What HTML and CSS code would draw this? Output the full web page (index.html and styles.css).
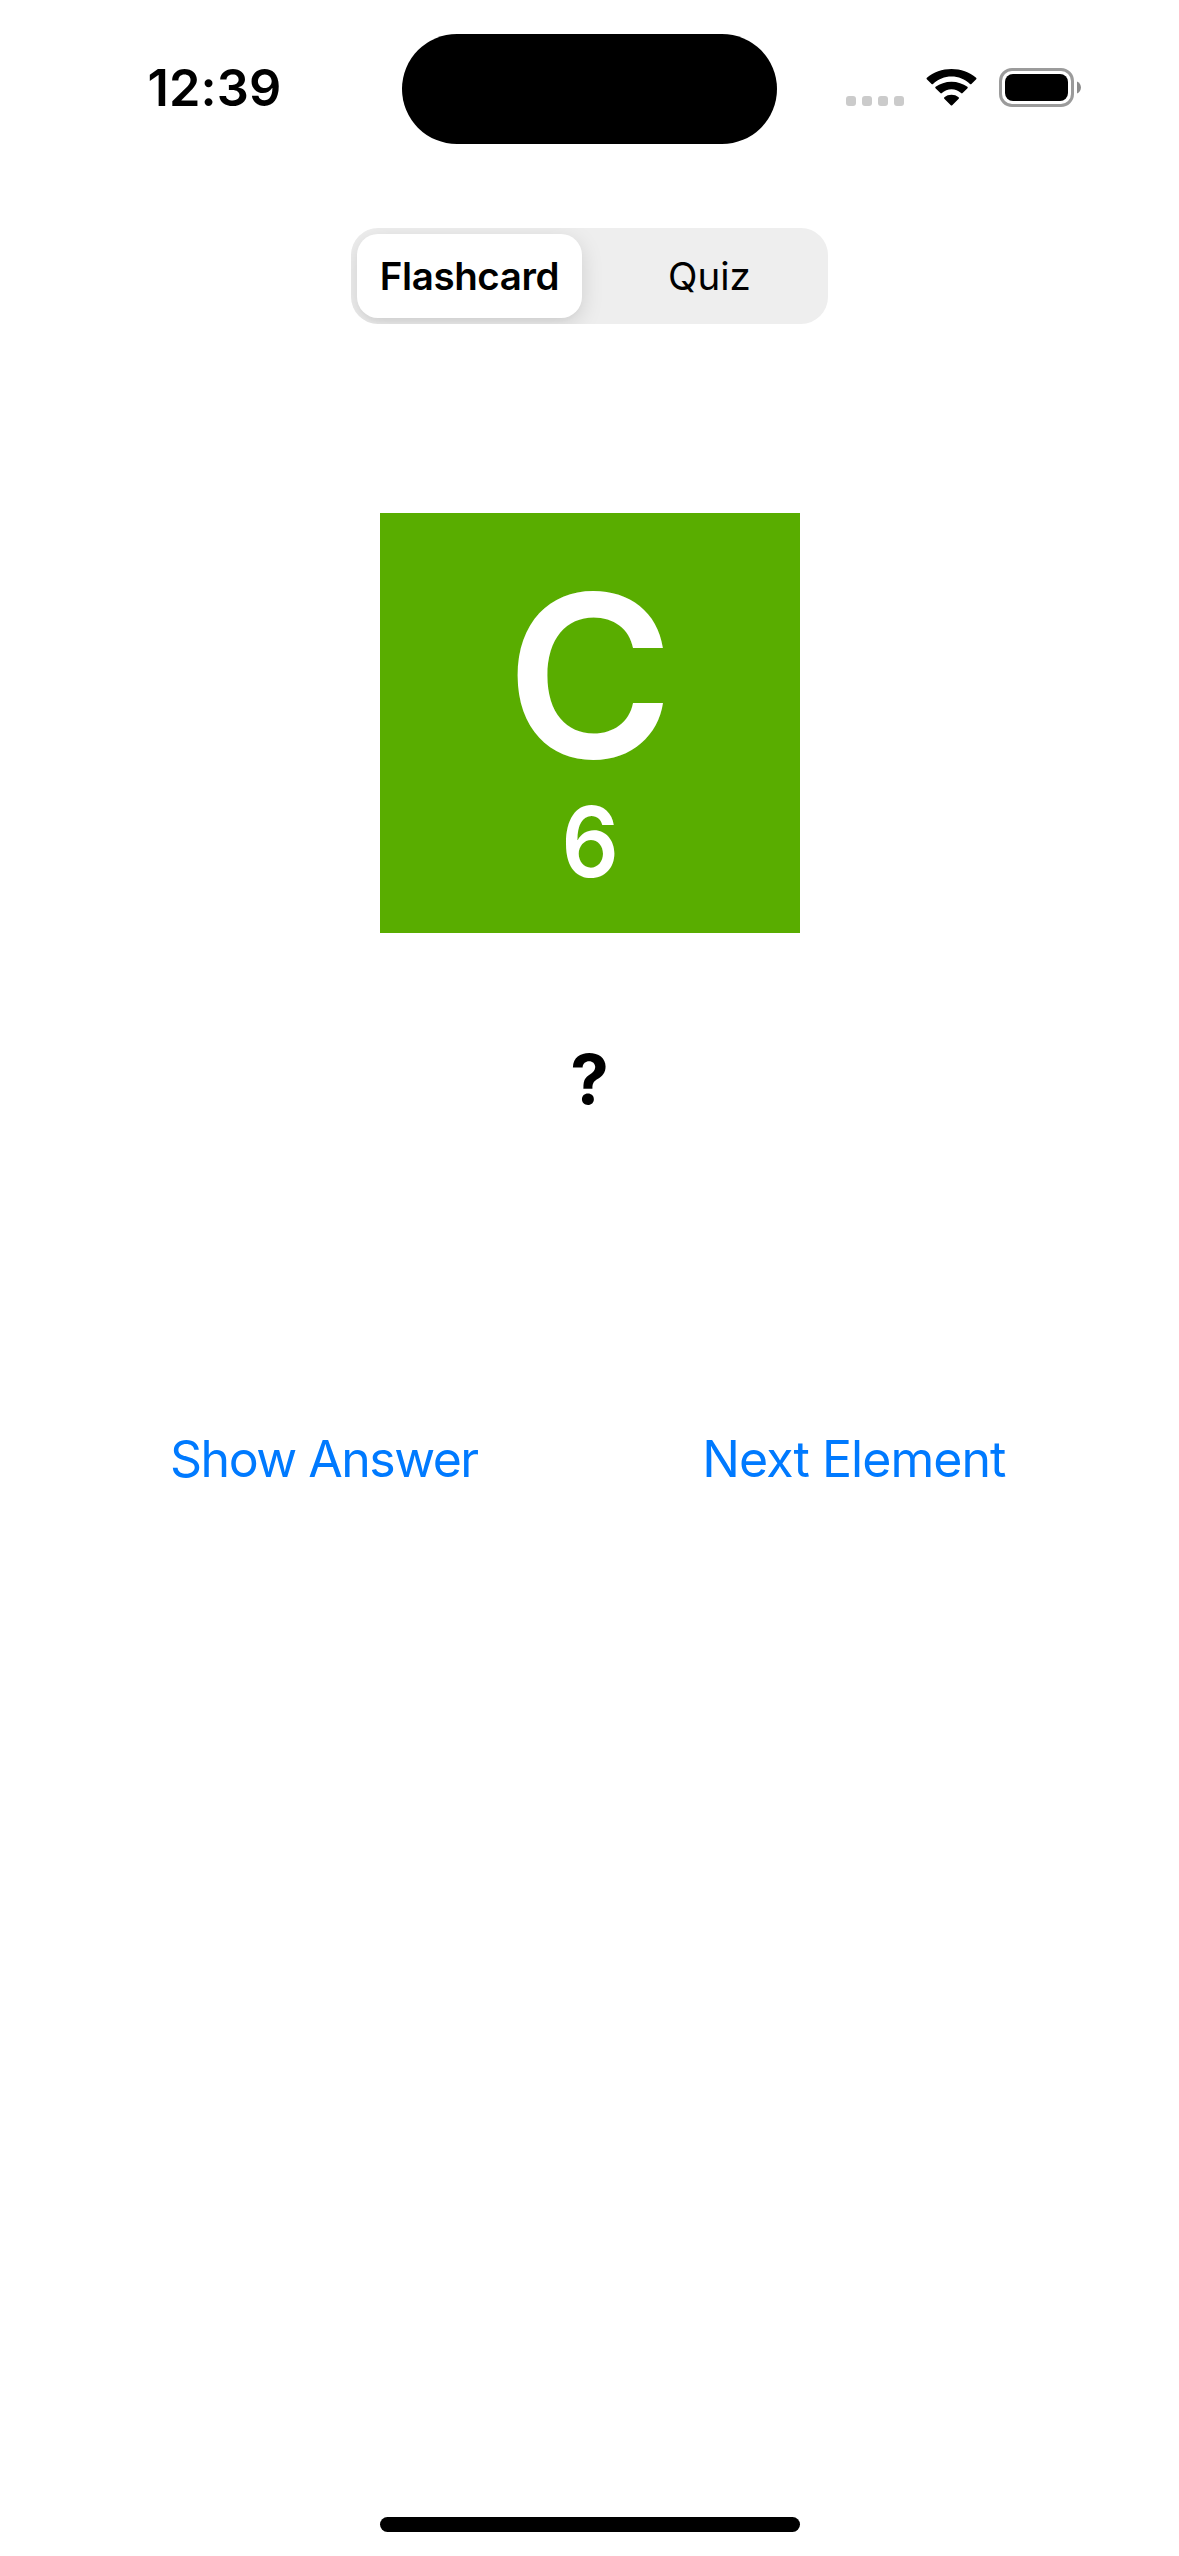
FILE: index.html
```html
<!DOCTYPE html>
<html lang="en">
<head>
<meta charset="utf-8">
<title>Elements</title>
<link rel="stylesheet" href="styles.css">
</head>
<body>
<div class="screen">
  <header class="status-bar">
    <div class="status-left"><span class="clock">12:39</span></div>
    <div class="island"></div>
    <div class="status-icons">
      <svg class="cellular" width="58" height="10" viewBox="0 0 58 10" fill="#cbcbcb">
        <rect x="0" width="10" height="10" rx="3"/>
        <rect x="16" width="10" height="10" rx="3"/>
        <rect x="32" width="10" height="10" rx="3"/>
        <rect x="48" width="10" height="10" rx="3"/>
      </svg>
      <svg class="wifi" width="51" height="37" viewBox="0 0 51 37">
        <path d="M25.500 7.600C32.400 7.600 38.900 10.200 44 15Q44.700 15.700 45.400 15L50.200 10.300Q50.900 9.500 50.100 8.800C43.500 3.200 34.800 0 25.500 0S7.500 3.200.9 8.800Q.1 9.500.8 10.300L5.600 15Q6.300 15.700 7 15C12.100 10.200 18.600 7.600 25.500 7.600Z"/>
        <path d="M25.500 20.300C29.100 20.300 32.500 21.700 35.100 24.100Q35.900 24.800 36.600 24.100L41.500 19.300Q42.200 18.500 41.400 17.800C37.100 14.800 31.500 12.800 25.500 12.800S13.900 14.800 9.600 17.800Q8.800 18.500 9.500 19.300L14.400 24.100Q15.100 24.800 15.900 24.100C18.500 21.700 21.900 20.300 25.500 20.300Z"/>
        <path d="M32.600 28.200Q33.400 28.900 32.700 29.700L26.200 36.200Q25.500 36.900 24.800 36.200L18.300 29.700Q17.600 28.900 18.400 28.200C22.300 24.900 28.700 24.900 32.600 28.200Z"/>
      </svg>
      <svg class="battery" width="82" height="39" viewBox="0 0 82 39">
        <rect x="1.500" y="1.500" width="72" height="36" rx="11.500" fill="none" stroke="#9b9b9b" stroke-width="3"/>
        <rect x="6" y="6" width="63" height="27" rx="8"/>
        <path d="M78 13.500C83.300 15.500 83.300 23.500 78 25.500Z" fill="#8c8c8c"/>
      </svg>
    </div>
  </header>
  <main class="content">
    <nav class="segmented">
      <span class="segment segment-active"><span class="label-flash">Flashcard</span></span>
      <span class="segment segment-quiz"><span class="label-quiz">Quiz</span></span>
    </nav>
    <section class="element-card">
      <div class="symbol">C</div>
      <div class="number">6</div>
    </section>
    <p class="answer">?</p>
    <div class="actions">
      <button class="action action-show" type="button">Show Answer</button>
      <button class="action action-next" type="button">Next Element</button>
    </div>
  </main>
  <footer class="home-indicator"></footer>
</div>
</body>
</html>
```
FILE: styles.css
```css
* { box-sizing: border-box; }
body { margin: 0; background: #fff; font-family: Inter, "Liberation Sans", sans-serif; color: #000; }
.screen { width: 1179px; height: 2556px; display: flex; flex-direction: column; align-items: center; overflow: hidden; background: #fff; }
.status-bar { width: 100%; height: 177px; display: grid; grid-template-columns: 401.500px 375.500px 1fr; align-items: start; flex: none; }
.status-left { padding: 58px 0 0 147.500px; }
.clock { display: block; font-size: 50.500px; font-weight: 600; line-height: 60px; letter-spacing: 0.1px; white-space: nowrap; }
.island { height: 110.500px; margin-top: 33.500px; border-radius: 56px; background: #000; }
.status-icons { display: flex; align-items: flex-start; padding: 68px 0 0 69px; }
.cellular { margin-top: 28px; }
.wifi { margin: 1px 0 0 22px; }
.battery { margin-left: 22px; }
.content { width: 100%; flex: 1; display: flex; flex-direction: column; align-items: center; }
.segmented { width: 477px; height: 96px; margin-top: 51px; padding: 6px; border-radius: 27px; background: #eee; display: grid; grid-template-columns: 225px 1fr; overflow: hidden; font-size: 38.500px; line-height: 48px; }
.segment { display: flex; align-items: center; justify-content: center; white-space: nowrap; }
.segment-active { border-radius: 21px; background: #fff; font-weight: 600; box-shadow: 0 6px 22px rgba(0, 0, 0, .13), 0 4px 3px rgba(0, 0, 0, .02); }
.segment-quiz { padding-left: 15px; }
.label-flash { letter-spacing: -0.4px; }
.element-card { width: 420px; height: 420px; margin-top: 189px; padding: 78px 0 0 1px; background: #59ad00; color: #fff; display: flex; flex-direction: column; align-items: center; font-weight: 600; }
.symbol { font-size: 227px; line-height: 170px; }
.number { font-size: 97.500px; line-height: 80px; margin-top: 41px; transform: scaleX(.92); }
.answer { margin: 104px 0 0; font-size: 69px; line-height: 84px; font-weight: 700; }
.actions { width: 100%; margin-top: 308px; display: flex; justify-content: space-between; padding: 0 173.500px 0 170px; }
.action { appearance: none; border: 0; padding: 0; background: none; font: 400 50px/60px Inter, "Liberation Sans", sans-serif; color: #007aff; white-space: nowrap; }
.action-show { letter-spacing: -1.5px; }
.action-next { letter-spacing: -.95px; }
.home-indicator { width: 420px; height: 15px; margin-bottom: 24px; border-radius: 8px; background: #000; flex: none; }
```
